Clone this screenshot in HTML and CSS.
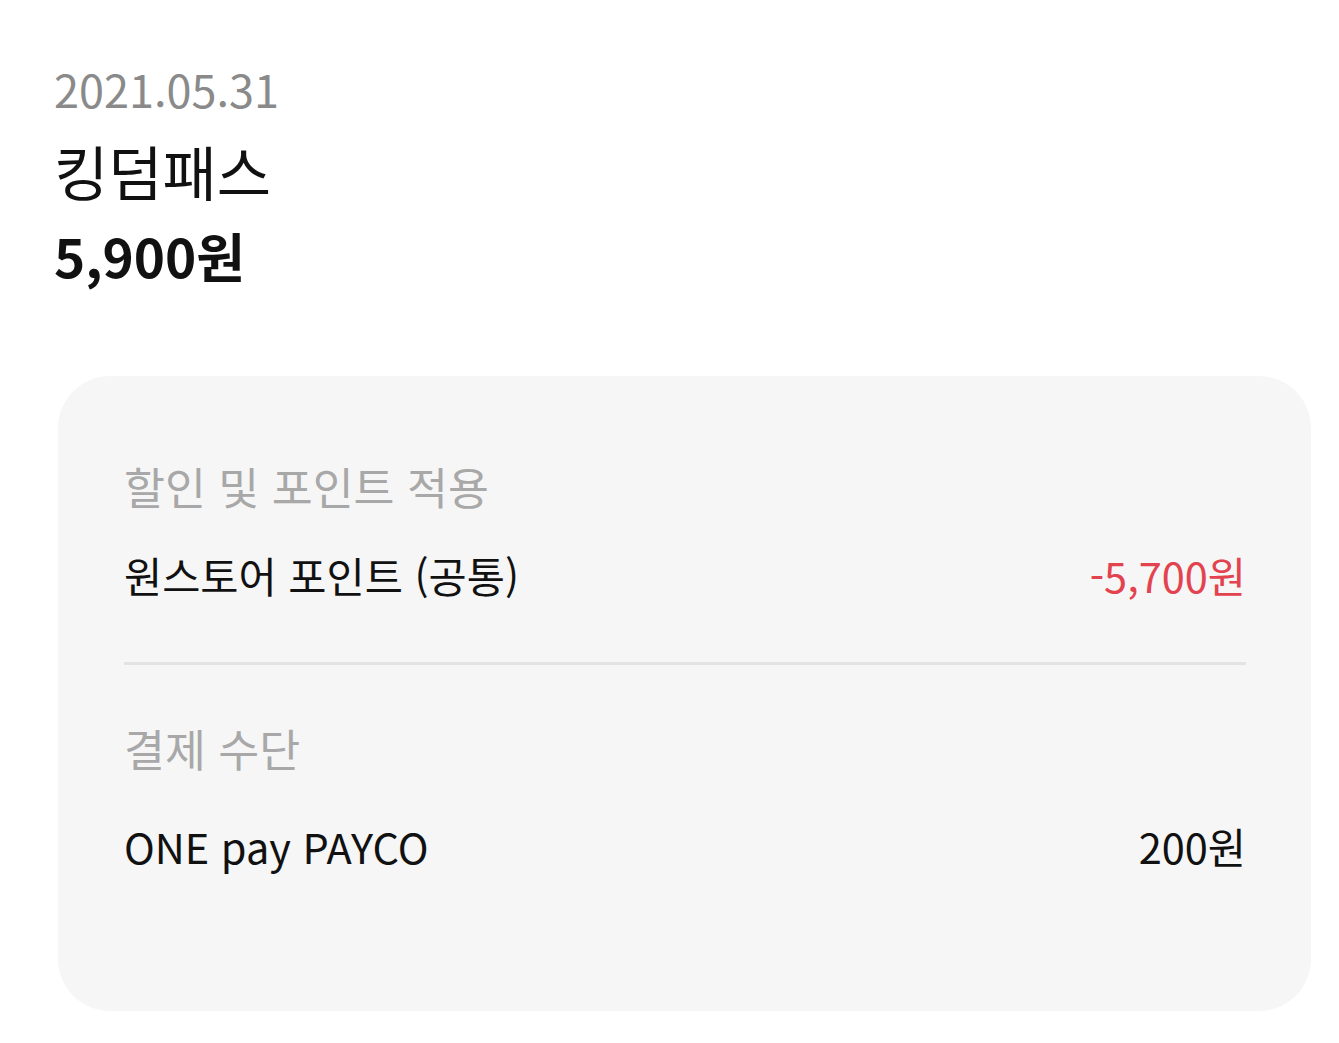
FILE: index.html
```html
<!DOCTYPE html>
<html lang="ko">
<head>
<meta charset="utf-8">
<link rel="stylesheet" href="styles.css">
</head>
<body>
<main class="page">
  <header class="summary">
    <div class="date">2021.05.31</div>
    <div class="title">킹덤패스</div>
    <div class="price">5,900원</div>
  </header>
  <section class="card">
    <div class="group">
      <div class="group-title">할인 및 포인트 적용</div>
      <div class="row">
        <span class="label">원스토어 포인트 (공통)</span>
        <span class="amount minus">-5,700원</span>
      </div>
    </div>
    <div class="divider"></div>
    <div class="group">
      <div class="group-title">결제 수단</div>
      <div class="row row-pay">
        <span class="label">ONE pay PAYCO</span>
        <span class="amount">200원</span>
      </div>
    </div>
  </section>
</main>
</body>
</html>
```

FILE: styles.css
```css
html, body {
  margin: 0;
  padding: 0;
  background: #ffffff;
}
body {
  font-family: "Noto Sans CJK KR", "Noto Sans", sans-serif;
  color: #000;
}
.page {
  padding: 60px 28px 0 54px;
}
.summary {
  display: flex;
  flex-direction: column;
}
.date {
  font-size: 45px;
  line-height: 58px;
  color: #8a8a8a;
}
.title {
  font-size: 59px;
  line-height: 80px;
  color: #111;
  margin-top: 13px;
}
.price {
  font-size: 53px;
  line-height: 86px;
  font-weight: 700;
  color: #111;
  margin-top: 1px;
}
.card {
  margin-top: 78px;
  margin-left: 4px;
  background: #f6f6f6;
  border-radius: 52px;
  padding: 80px 65px 138px 66px;
}
.group-title {
  font-size: 44.5px;
  line-height: 60px;
  color: #a8a8a8;
}
.row {
  display: flex;
  justify-content: space-between;
  align-items: center;
  margin-top: 32px;
  font-size: 41.5px;
  line-height: 54px;
}
.row-pay {
  margin-top: 41px;
}
.label { color: #111; }
.amount { color: #111; }
.amount.minus { color: #e2434f; }
.divider {
  height: 3px;
  background: #e3e3e3;
  margin: 60px 0 53px;
}
```
